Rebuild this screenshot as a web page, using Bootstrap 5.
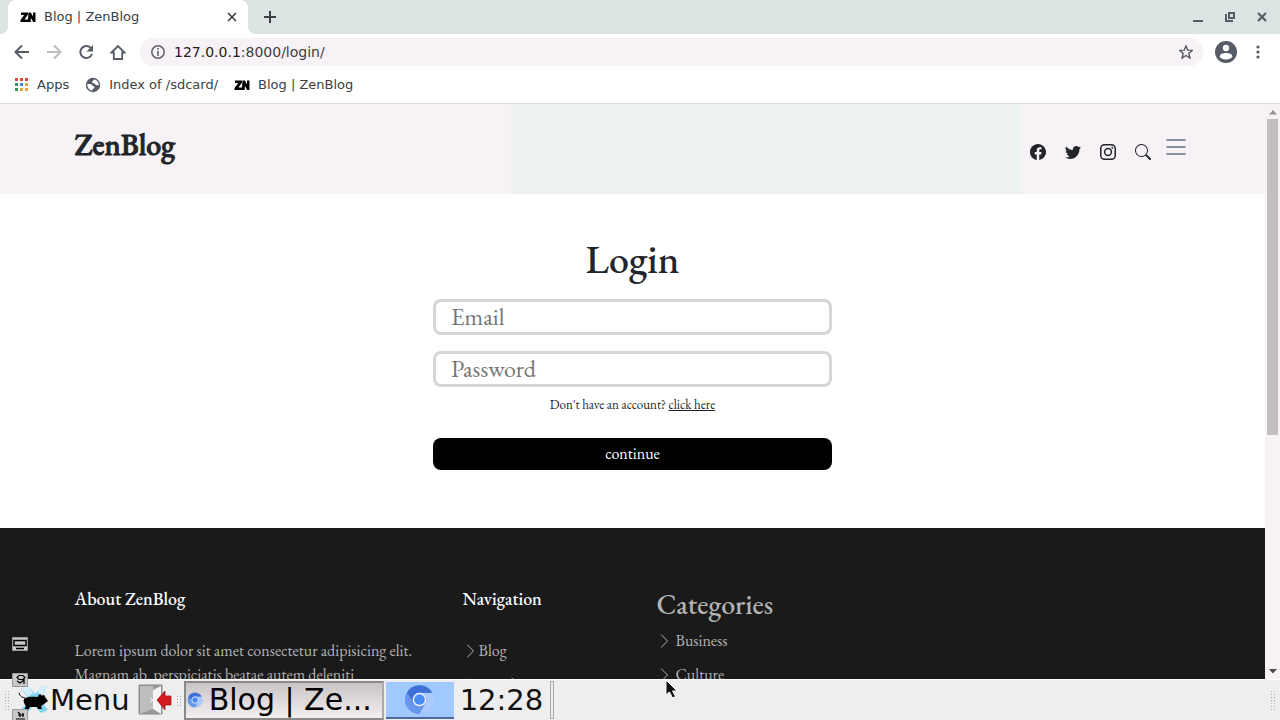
<!DOCTYPE html>
<html lang="en">
<head>
<meta charset="utf-8">
<meta name="viewport" content="width=device-width, initial-scale=1">
<title>Blog | ZenBlog</title>
<link href="https://cdn.jsdelivr.net/npm/bootstrap@5.3.0/dist/css/bootstrap.min.css" rel="stylesheet">
<script src="https://cdn.jsdelivr.net/npm/bootstrap@5.3.0/dist/js/bootstrap.bundle.min.js"></script>
<style>
  body { font-family: "DejaVu Sans", sans-serif; font-size: 13px; color: #3c4043; line-height: 20px; }
  svg { display: block; flex: none; }
  .plain { border: 0; padding: 0; background: none; color: #565c65; display: block; }
  a.quiet { color: inherit; text-decoration: none; }
  /* browser frame */
  .tabstrip { background: #dce3e3; height: 34px; }
  .active-tab { width: 240px; height: 34px; margin-left: 8px; padding: 0 10px 0 12px; border-radius: 8px 8px 0 0; position: relative; }
  .active-tab::before, .active-tab::after { content: ""; position: absolute; bottom: 0; width: 8px; height: 8px; }
  .active-tab::before { left: -8px; background: radial-gradient(circle at 0 0, #dce3e3 8px, #fff 8px); }
  .active-tab::after { right: -8px; background: radial-gradient(circle at 100% 0, #dce3e3 8px, #fff 8px); }
  .window-btns { gap: 22px; padding-right: 13px; }
  .toolbar { height: 36px; padding: 0 13px 0 12px; }
  .omnibox { background: #f7f2f6; height: 28px; padding: 0 10px 0 11px; margin-left: 14px; }
  .address { font-size: 14px; color: #777b80; margin-left: 9px; }
  .address b { font-weight: 400; color: #202124; }
  .bookmarks { height: 34px; padding: 0 13px 4px; border-bottom: 1px solid #dadcdf; }
  /* web page */
  .webpage { font-family: "EB Garamond", "Liberation Serif", serif; font-size: 16px; color: #212529; line-height: 24px; min-width: 0; }
  .site-header { height: 90px; background: linear-gradient(90deg, #f7f2f6 40.4%, #edf3ee 40.4% 80.7%, #f7f2f6 80.7%); }
  .site-name { font-size: 30px; font-weight: 500; -webkit-text-stroke: 1px currentColor; line-height: 36px; margin-bottom: 8px; }
  .socials { gap: 19px; padding: 6px 5px 0 0; }
  .socials .menu-btn { margin: -10px 0 0 -4px; color: #5f6f82; }
  .login { width: 100%; max-width: 399px; padding: 41px 0 58px; }
  .login h1 { font-size: 40px; line-height: 48px; margin-bottom: 16px; color: #212529; }
  .login .field { height: 36px; border: 3px solid #d6d6d6; border-radius: 8px; padding: 0 15px 2px; font-size: 24px; margin-bottom: 16px; line-height: 28px; color: #212529; }
  .login .field::placeholder { color: #757575; opacity: 1; }
  .signup { font-size: 13px; line-height: 20px; margin: -8px 0 23px; }
  .go-btn { background: #000; color: #fff; border: 0; border-radius: 8px; height: 32px; font-size: 16px; }
  .site-footer { background: #1a1a1a; color: #b3b3b3; padding-top: 60px; }
  .site-footer h3 { font-size: 18px; line-height: 22px; color: #fff; margin-bottom: 29px; }
  .site-footer h2 { font-size: 28px; line-height: 32px; margin-bottom: 9px; }
  .site-footer li { margin-bottom: 10px; }
  .link-wide { gap: 3px; }
  .scroller { width: 15px; background: #f7f2f6; padding: 6px 0 5px; }
  .thumb { width: 11px; height: 316px; background: #c1bfc1; margin-top: 4px; }
  /* desktop panel */
  .panel { height: 41px; background: #eee; border-top: 1px solid #fff; color: #111; font-size: 29px; line-height: 40px; position: relative; }
  .grip { width: 6px; height: 20px; background: radial-gradient(circle, #aaa 1px, transparent 1px) 0 0 / 3px 3px; }
  .grip-short { height: 11px; margin: 0 2px 0 4px; }
  .task { width: 200px; height: 39px; padding: 0 8px 0 1px; gap: 6px; border: 2px solid #8c8989; border-right-color: #aaa; background: linear-gradient(#c9c4c5, #f3efef); font-size: 30px; line-height: 34px; }
  .task-icon { width: 68px; height: 37px; background: #a0caff; border-bottom: 2px solid #4a6d9e; margin-left: 2px; }
  .clock { margin: 0 7px 0 6px; }
  .panel-end { width: 4px; height: 38px; border: 1px solid #aaa79e; }
  .gadget { position: absolute; left: 12px; bottom: 0; }
  .pointer { position: absolute; left: 665px; top: 679px; }
</style>
</head>
<body class="bg-white">
<svg width="0" height="0" class="position-absolute" aria-hidden="true">
  <defs>
    <symbol id="zn" viewBox="0 0 16 16"><path d="M1 3.500h7v2L4.500 10.500H8l.5-7h2.300l2.200 4v-4h2.500V13h-2.300l-2.400-4.200V13H.5v-2l3.700-5H1z"/></symbol>
    <symbol id="chev" viewBox="0 0 16 16"><path fill="none" stroke="currentColor" stroke-linecap="round" stroke-linejoin="round" d="m4.500 2 6 6-6 6"/></symbol>
    <symbol id="chromium" viewBox="0 0 32 32"><circle cx="16" cy="16" r="15" fill="#6697ea"/><path fill="#aacbfb" d="M29.500 9A15 15 0 0 1 16 31l6.500-12A7 7 0 0 0 16 9z"/><path fill="#3f70d8" d="M3 9A15 15 0 0 1 29 9H16a7 7 0 0 0-6.500 9z"/><circle cx="16" cy="16" r="7" fill="#f0f5ff"/><circle cx="16" cy="16" r="5.500" fill="#478bf5"/></symbol>
  </defs>
</svg>
<div class="vh-100 d-flex flex-column overflow-hidden position-relative">
  <div class="tabstrip d-flex align-items-center flex-shrink-0">
    <div class="active-tab bg-white d-flex align-items-center">
      <svg width="16" height="16"><use href="#zn"/></svg>
      <span class="ms-2 flex-grow-1">Blog | ZenBlog</span>
      <button class="plain" aria-label="Close tab"><svg width="12" height="12" viewBox="0 0 12 12"><path d="m2 2 8 8m0-8-8 8" stroke="#3c4043" stroke-width="1.700"/></svg></button>
    </div>
    <button class="plain ms-3" aria-label="New tab"><svg width="12" height="12" viewBox="0 0 12 12"><path d="M6 0v12M0 6h12" stroke="#3c4043" stroke-width="2"/></svg></button>
    <div class="window-btns ms-auto d-flex align-items-center">
      <button class="plain" aria-label="Minimize"><svg width="10" height="10" viewBox="0 0 10 10"><path d="M0 9h10" stroke="#565c65" stroke-width="2"/></svg></button>
      <button class="plain" aria-label="Restore"><svg width="10" height="10" viewBox="0 0 10 10"><path d="M4 1h5v5H4zM1 2v7h7" fill="none" stroke="#565c65" stroke-width="2"/></svg></button>
      <button class="plain" aria-label="Close"><svg width="10" height="10" viewBox="0 0 10 10"><path d="m1 1 8 8m0-8-8 8" stroke="#565c65" stroke-width="2.200"/></svg></button>
    </div>
  </div>
  <div class="toolbar d-flex align-items-center flex-shrink-0">
    <div class="d-flex gap-3">
      <button class="plain" aria-label="Back"><svg width="18" height="20" viewBox="0 0 18 20"><path d="M17 10H4M10 3.500 3.500 10l6.500 6.500" fill="none" stroke="currentColor" stroke-width="2"/></svg></button>
      <button class="plain" aria-label="Forward" disabled><svg width="16" height="20" viewBox="2 0 16 20"><path d="M3 10h13M10 3.500l6.500 6.500-6.500 6.500" fill="none" stroke="#bcbdc1" stroke-width="2"/></svg></button>
      <button class="plain" aria-label="Reload"><svg width="16" height="20" viewBox="0 0 16 20"><path d="M13.200 6.500A6 6 0 1 0 14 12" fill="none" stroke="currentColor" stroke-width="2"/><path d="M15 3v6.500H8.500z" fill="currentColor"/></svg></button>
      <button class="plain" aria-label="Home"><svg width="16" height="20" viewBox="0 0 16 20"><path d="M1.500 10.500 8 4l6.500 6.500h-2.300V17H3.800v-6.500z" fill="none" stroke="currentColor" stroke-width="1.800"/></svg></button>
    </div>
    <div class="omnibox rounded-pill flex-grow-1 d-flex align-items-center">
      <svg width="14" height="14" viewBox="0 0 14 14"><circle cx="7" cy="7" r="6.200" fill="none" stroke="#5f6368" stroke-width="1.500"/><path d="M7 6v5M7 3v1.700" stroke="#5f6368" stroke-width="1.600"/></svg>
      <a class="quiet address flex-grow-1" href="#"><b>127.0.0.1</b>:8000/login/</a>
      <button class="plain" aria-label="Bookmark this page"><svg width="14" height="14" viewBox="1 1 14 14"><path d="m8 1.800 1.700 4.300 4.700.3-3.600 3 1.200 4.700L8 11.500l-4 2.600 1.200-4.700-3.600-3 4.700-.3z" fill="none" stroke="currentColor" stroke-width="1.400"/></svg></button>
    </div>
    <button class="plain ms-2 ps-1" aria-label="Profile"><svg width="22" height="22" viewBox="0 0 22 22"><circle cx="11" cy="11" r="11" fill="#565c65"/><circle cx="11" cy="7" r="3.200" fill="#fff"/><ellipse cx="11" cy="15.200" rx="6.200" ry="3.300" fill="#fff"/></svg></button>
    <button class="plain ms-3 me-1" aria-label="Menu"><svg width="10" height="16" viewBox="0 0 10 16"><g fill="currentColor"><circle cx="5" cy="3" r="1.600"/><circle cx="5" cy="8" r="1.600"/><circle cx="5" cy="13" r="1.600"/></g></svg></button>
  </div>
  <nav class="bookmarks d-flex align-items-center gap-3 flex-shrink-0" aria-label="Bookmarks">
    <a class="quiet d-flex align-items-center gap-2" href="#">
      <svg width="16" height="16" viewBox="0 0 16 16"><path fill="#d9483b" d="M2 1h3v3H2zM7 1h3v3H7zM12 1h3v3h-3z"/><path fill="#349658" d="M2 6h3v3H2z"/><path fill="#4285d8" d="M7 6h3v3H7z"/><path fill="#e3a83c" d="M12 6h3v3h-3zM7 11h3v3H7zM12 11h3v3h-3z"/><path fill="#349658" d="M2 11h3v3H2z"/></svg>
      <span>Apps</span></a>
    <a class="quiet d-flex align-items-center gap-2" href="#">
      <svg width="16" height="16" viewBox="0 0 16 16"><circle cx="8" cy="8" r="7.200" fill="#555b65"/><path fill="#fff" d="M2.200 7c2 0 4.200-.2 5 1.300.6 1.200 2.300.6 2.300 2S7.500 11.500 7 13.700C4 13 2.200 10.500 2.200 7zM9 2.200c0 1.600-2 1.500-2 2.800s2.500 1 3.200 2.200S12.500 8.500 13.800 8c0-3-2-5.300-4.800-5.800z"/></svg>
      <span>Index of /sdcard/</span></a>
    <a class="quiet d-flex align-items-center gap-2" href="#"><svg width="16" height="16"><use href="#zn"/></svg><span>Blog | ZenBlog</span></a>
  </nav>

  <div class="d-flex flex-grow-1 overflow-hidden">
    <div class="webpage flex-grow-1 overflow-hidden">
      <header class="site-header d-flex align-items-center">
        <div class="container d-flex align-items-center justify-content-between">
          <a class="quiet site-name" href="#">ZenBlog</a>
          <div class="socials d-flex align-items-center">
            <a class="quiet" href="#" aria-label="Facebook"><svg width="16" height="16" viewBox="0 0 16 16" fill="currentColor"><path d="M16 8.049c0-4.446-3.582-8.050-8-8.050C3.580 0-.002 3.603-.002 8.050c0 4.017 2.926 7.347 6.750 7.951v-5.625h-2.030V8.050H6.750V6.275c0-2.017 1.195-3.131 3.022-3.131.876 0 1.791.157 1.791.157v1.980h-1.009c-.993 0-1.303.621-1.303 1.258v1.510h2.218l-.354 2.326H9.250V16c3.824-.604 6.750-3.934 6.750-7.951z"/></svg></a>
            <a class="quiet" href="#" aria-label="Twitter"><svg width="16" height="16" viewBox="0 0 16 16" fill="currentColor"><path d="M5.026 15c6.038 0 9.341-5.003 9.341-9.334 0-.14 0-.282-.006-.422A6.685 6.685 0 0 0 16 3.542a6.658 6.658 0 0 1-1.889.518 3.301 3.301 0 0 0 1.447-1.817 6.533 6.533 0 0 1-2.087.793A3.286 3.286 0 0 0 7.875 6.030a9.325 9.325 0 0 1-6.767-3.429 3.289 3.289 0 0 0 1.018 4.382A3.323 3.323 0 0 1 .64 6.575v.045a3.288 3.288 0 0 0 2.632 3.218 3.203 3.203 0 0 1-.865.115 3.230 3.230 0 0 1-.614-.057 3.283 3.283 0 0 0 3.067 2.277A6.588 6.588 0 0 1 .78 13.580a6.320 6.320 0 0 1-.78-.045A9.344 9.344 0 0 0 5.026 15z"/></svg></a>
            <a class="quiet" href="#" aria-label="Instagram"><svg width="16" height="16" viewBox="0 0 16 16" fill="none" stroke="currentColor" stroke-width="1.500"><rect x=".75" y=".75" width="14.500" height="14.500" rx="3.800"/><circle cx="8" cy="8" r="3.400"/><circle cx="12.270" cy="3.730" r=".96" fill="currentColor" stroke="none"/></svg></a>
            <button class="plain text-dark" aria-label="Search"><svg width="16" height="16" viewBox="0 0 16 16" fill="currentColor"><path d="M11.742 10.344a6.500 6.500 0 1 0-1.397 1.398h-.001c.03.04.062.078.098.115l3.850 3.850a1 1 0 0 0 1.415-1.414l-3.850-3.850a1.007 1.007 0 0 0-.115-.1zM12 6.500a5.500 5.500 0 1 1-11 0 5.500 5.500 0 0 1 11 0z"/></svg></button>
            <button class="plain menu-btn" aria-label="Open menu"><svg width="20" height="18" viewBox="0 0 20 18"><path d="M1 2h18M1 9h18M1 16h18" stroke="currentColor" stroke-width="1.600" stroke-linecap="round"/></svg></button>
          </div>
        </div>
      </header>
      <main>
        <form class="login mx-auto text-center">
          <h1>Login</h1>
          <input class="field d-block w-100" type="email" placeholder="Email" aria-label="Email">
          <input class="field d-block w-100" type="password" placeholder="Password" aria-label="Password">
          <p class="signup">Don't have an account? <a class="text-reset" href="#">click here</a></p>
          <button class="go-btn d-block w-100" type="button">continue</button>
        </form>
      </main>
      <footer class="site-footer">
        <div class="container">
          <div class="row gx-5">
            <div class="col-4"><h3>About ZenBlog</h3><p>Lorem ipsum dolor sit amet consectetur adipisicing elit. Magnam ab, perspiciatis beatae autem deleniti</p></div>
            <div class="col-2"><h3>Navigation</h3>
              <ul class="list-unstyled">
                <li><a class="quiet d-flex align-items-center" href="#"><svg width="16" height="16"><use href="#chev"/></svg>Blog</a></li>
                <li><a class="quiet d-flex align-items-center" href="#"><svg width="16" height="16"><use href="#chev"/></svg>Search</a></li>
              </ul></div>
            <div class="col-2"><h2>Categories</h2>
              <ul class="list-unstyled">
                <li><a class="quiet d-flex align-items-center link-wide" href="#"><svg width="16" height="16"><use href="#chev"/></svg>Business</a></li>
                <li><a class="quiet d-flex align-items-center link-wide" href="#"><svg width="16" height="16"><use href="#chev"/></svg>Culture</a></li>
              </ul></div>
          </div>
        </div>
      </footer>
    </div>
    <div class="scroller d-flex flex-column align-items-center flex-shrink-0" aria-hidden="true">
      <svg width="8" height="5" viewBox="0 0 8 5"><path d="M0 4.500 4 0l4 4.500z" fill="#969396"/></svg>
      <div class="thumb"></div>
      <svg class="mt-auto" width="8" height="5" viewBox="0 0 8 5"><path d="M0 0h8L4 4.500z" fill="#4c4a4c"/></svg>
    </div>
  </div>

  <div class="panel d-flex align-items-center flex-shrink-0">
    <div class="grip ms-1"></div>
    <button class="plain d-flex align-items-center text-reset ms-2" type="button">
      <svg width="32" height="32" viewBox="0 0 32 32"><path fill="#7fd3f0" d="m3 4 7-2 7 8 7-8 5 1-7 12 8 11-7 3-7-8-7 8-6-3 8-10z"/><path fill="#d5effa" d="m3 4 7-2 5 7-5 4zM19 7l5-5 5 1-6 9z"/><path fill="none" stroke="#000" d="M1 9c1 3 2 4 6 5"/><path fill="#000" d="M6 15c4-3 9-2 14-2 0-3 3-4 4-1 1-2 3-1 3 1l3 4-4 3-3 2 1 3h-4l-1-2h-7l-2 3H6l2-4c-2-2-3-5-2-7z"/></svg>
      <span>Menu</span></button>
    <button class="plain ms-2" type="button" aria-label="Log out"><svg width="34" height="32" viewBox="0 0 34 32"><path fill="#999" stroke="#888" d="M1 1h23v29H1z"/><path fill="#f4f4f4" d="M15 6l8-4v28l-8-5z"/><path fill="#bdbdbd" d="M2 2h13v23L2 30z"/><path d="m12 14 3 2-3 2" fill="none" stroke="#fff"/><path fill="#d51a20" stroke="#8c1015" stroke-width=".7" d="m19 16 8-9v5h6v9h-6v5z"/></svg></button>
    <div class="grip grip-short"></div>
    <button class="task d-flex align-items-center text-black text-nowrap" type="button"><svg width="16" height="16"><use href="#chromium"/></svg>Blog | Ze...</button>
    <button class="task-icon plain d-flex align-items-center justify-content-center" type="button" aria-label="Chromium"><svg width="31" height="31"><use href="#chromium"/></svg></button>
    <time class="clock">12:28</time>
    <div class="panel-end"></div>
    <div class="grip ms-auto me-1"></div>
  </div>

  <svg class="gadget" width="16" height="84" viewBox="0 0 16 84" aria-hidden="true">
    <g fill="#c8c8c8" stroke="#999"><path d="M.5 1.500h15v13H.5zM.5 37.500h15v13H.5zM.5 73.500h15v13H.5z"/></g>
    <path fill="none" stroke="#000" stroke-width="1.500" d="M2 4.500h12v5H2zM4 12.500h8"/>
    <path fill="none" stroke="#000" stroke-width="1.200" d="M7 39.500h4l2 2-2 2H7l-2-2zM5 45l3 2 4-3v4M6 76l2 2v3M6 79h6M11 77v4M4 83h9"/>
  </svg>
  <svg class="pointer" width="15" height="21" viewBox="0 0 15 21" aria-hidden="true"><path fill="#111" stroke="#fff" d="M1 1v15l3.500-3 3 6 3-1.500-3-5.500H12z"/></svg>
</div>
</body>
</html>
